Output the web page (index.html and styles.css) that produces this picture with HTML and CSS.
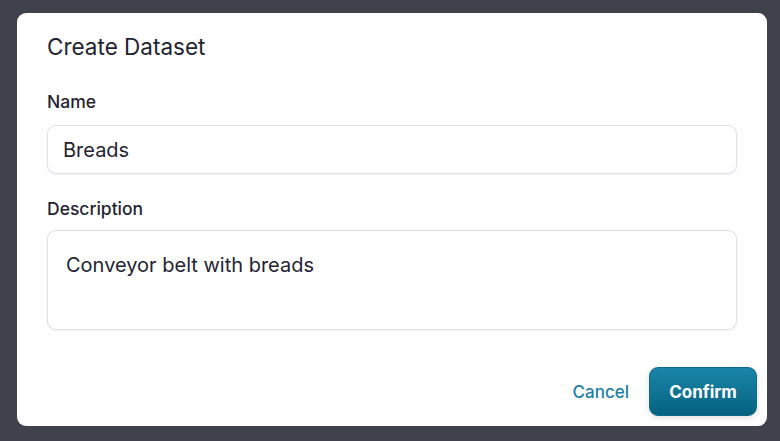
FILE: index.html
```html
<!DOCTYPE html>
<html lang="en">
<head>
  <meta charset="UTF-8" />
  <title>Create Dataset</title>
  <link rel="stylesheet" href="styles.css">
</head>
<body>
  <div class="modal">
    <h2 class="modal-title">Create Dataset</h2>
    <form class="dataset-form">
      <label class="field">
        <span class="field-label">Name</span>
        <input type="text" name="name" value="Breads" />
      </label>
      <label class="field field-area">
        <span class="field-label">Description</span>
        <textarea name="description">Conveyor belt with breads</textarea>
      </label>
      <div class="actions">
        <button type="button" class="btn-cancel">Cancel</button>
        <button type="submit" class="btn-confirm">Confirm</button>
      </div>
    </form>
  </div>
</body>
</html>
```

FILE: styles.css
```css
* {
  box-sizing: border-box;
}

body {
  margin: 0;
  height: 441px;
  background: #3f424a;
  font-family: Inter, "Noto Sans", sans-serif;
  color: #1f2432;
  padding: 13px 14px 15px 17px;
}

.modal {
  background: #fff;
  width: 750px;
  height: 413px;
  border-radius: 9px;
  padding: 20px 30px 10px 30px;
}

.modal-title {
  margin: 0 0 29px;
  font-size: 22.5px;
  font-weight: 400;
  line-height: 28px;
}

.dataset-form {
  display: flex;
  flex-direction: column;
}

.field {
  display: flex;
  flex-direction: column;
  margin-bottom: 23px;
}

.field-label {
  font-size: 17.5px;
  font-weight: 500;
  line-height: 24px;
  margin-bottom: 11px;
}

.field-area .field-label {
  margin-bottom: 9px;
}

input, textarea {
  width: 690px;
  font-family: inherit;
  font-size: 20px;
  color: #1f2432;
  border: 1px solid #dfe1e8;
  border-radius: 9px;
  box-shadow: 0 1px 2px rgba(20, 30, 50, 0.06);
  outline: none;
}

input {
  height: 49px;
  padding: 0 15px;
}

textarea {
  height: 100px;
  padding: 21px 18px;
  line-height: 26px;
  resize: none;
}

.actions {
  display: flex;
  justify-content: flex-end;
  align-items: center;
  gap: 20px;
  margin-top: 14px;
  margin-right: -20px;
}

.btn-cancel {
  background: none;
  border: none;
  font-family: inherit;
  font-size: 17px;
  font-weight: 500;
  color: #1a80a5;
  padding: 0;
}

.btn-confirm {
  width: 108px;
  height: 49px;
  border: 1px solid #0a6a8b;
  border-radius: 9px;
  background: linear-gradient(#1b85aa, #04627f);
  color: #fff;
  font-family: inherit;
  font-size: 17px;
  font-weight: 700;
  box-shadow: 0 2px 6px rgba(0, 0, 0, 0.12);
}
```
